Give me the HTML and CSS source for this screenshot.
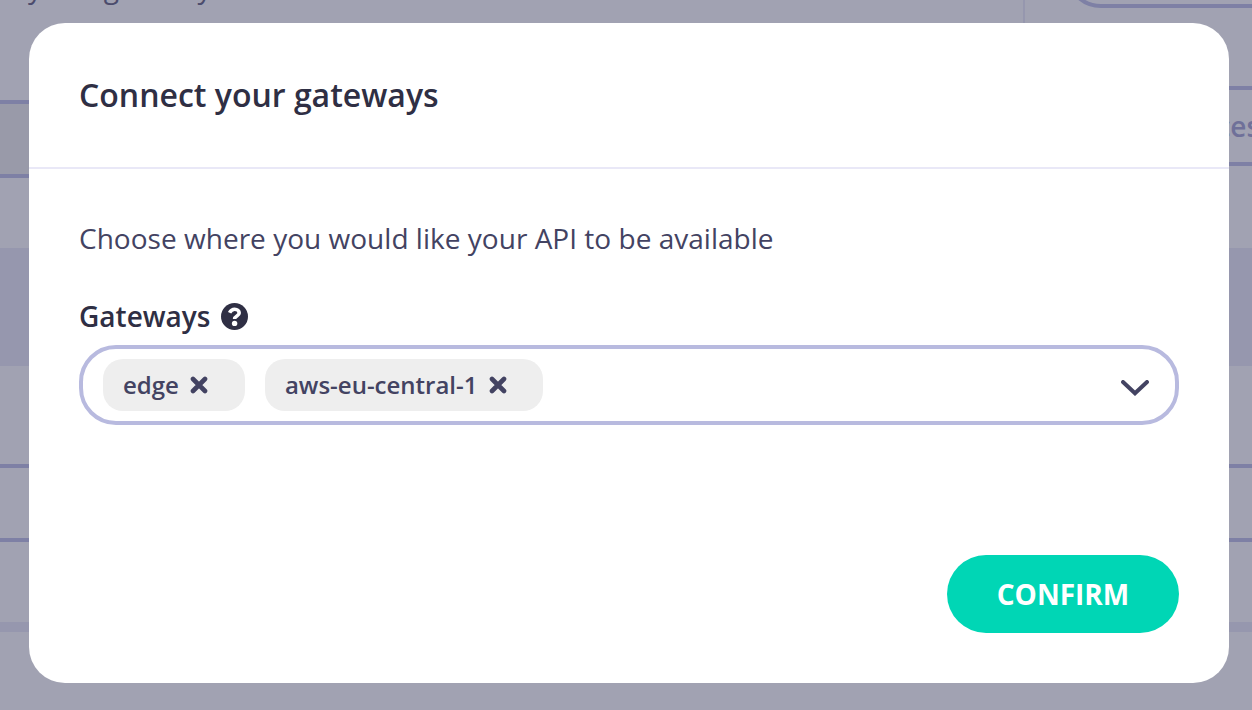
FILE: index.html
```
<!DOCTYPE html>
<html lang="en">
<head>
<meta charset="utf-8">
<title>Connect your gateways</title>
<link rel="stylesheet" href="styles.css">
</head>
<body>
<div class="page">
  <div class="columns">
    <div class="main">
      <p class="intro">your gateway</p>
      <div class="field disabled"></div>
    </div>
    <div class="side">
      <div class="pill"></div>
      <div class="field search"><span>Services</span></div>
    </div>
  </div>
  <div class="band"></div>
  <div class="wide-field"></div>
  <div class="rule"></div>
</div>
<div class="overlay">
  <section class="modal">
    <header class="modal-header"><h1>Connect your gateways</h1></header>
    <div class="modal-body">
      <p class="lead">Choose where you would like your API to be available</p>
      <div class="label"><span>Gateways</span>
        <svg class="help" viewBox="0 0 27 27"><circle cx="13.5" cy="13.5" r="13.5" fill="#2f2f44"/><path d="M8.6 9.8C9.7 7.4 11.4 6.2 13.7 6.2C16.3 6.2 18.2 7.8 18.2 10C18.2 13.1 13.6 12.8 13.6 16" fill="none" stroke="#fff" stroke-width="3.6"/><circle cx="13.6" cy="20.4" r="2.7" fill="#fff"/></svg>
      </div>
      <div class="select">
        <div class="chip"><span>edge</span><svg class="close" viewBox="0 0 18 18"><path d="M3 3L15 15M15 3L3 15"/></svg></div>
        <div class="chip"><span>aws-eu-central-1</span><svg class="close" viewBox="0 0 18 18"><path d="M3 3L15 15M15 3L3 15"/></svg></div>
        <svg class="chevron" viewBox="0 0 28 16"><path d="M2 2L14 13.3L26 2"/></svg>
      </div>
      <div class="actions"><button class="confirm">CONFIRM</button></div>
    </div>
  </section>
</div>
</body>
</html>
```
FILE: styles.css
```
* { box-sizing: border-box; }
body {
  margin: 0;
  height: 710px;
  overflow: hidden;
  font-family: "Open Sans", sans-serif;
  color: #434362;
}
h1, p { margin: 0; }
.page { height: 710px; overflow: hidden; background: #a1a2b2; }
.columns { display: flex; height: 248px; }
.main { flex: none; width: 1025px; height: 248px; border-right: 2px solid #9697ae; }
.intro { margin-top: -32px; padding-left: 28px; height: 132px; font-size: 28px; line-height: 38px; word-spacing: 9px; color: #4c4c6d; }
.field { height: 78px; border: solid #7e80a5; border-width: 4px 0; }
.disabled { background: #999aa9; }
.side { flex: 1; min-width: 0; padding-left: 40px; }
.pill { width: 300px; height: 78px; margin-top: -70px; border: 4px solid #7e80a5; border-radius: 36px; }
.search { height: 80px; margin-top: 78px; padding-left: 85px; font-size: 28px; line-height: 72px; font-weight: 600; color: #6f7099; white-space: nowrap; }
.band { height: 118px; background: #9697ae; }
.wide-field { height: 78px; margin-top: 98px; border: solid #7e80a5; border-width: 4px 0; }
.rule { height: 10px; margin-top: 80px; background: #9697ae; }
.overlay { position: fixed; inset: 0; padding: 23px 23px 27px 29px; }
.modal { width: 1200px; height: 660px; border-radius: 36px; background: #fff; }
.modal-header { height: 146px; padding: 50px 50px 0; border-bottom: 2px solid #e9e8f7; }
h1 { font-size: 32px; line-height: 44px; font-weight: 600; color: #2f2f44; white-space: nowrap; }
.modal-body { padding: 49px 50px; }
.lead { font-size: 28px; line-height: 40px; letter-spacing: 0.02px; white-space: nowrap; }
.label { display: flex; align-items: center; gap: 11px; height: 40px; margin-top: 38px; font-size: 28px; font-weight: 600; line-height: 40px; color: #2f2f44; }
.help { width: 27px; height: 27px; }
.select { display: flex; align-items: center; gap: 20px; height: 80px; margin-top: 9px; padding: 0 26px 0 20px; border: 4px solid #b8badf; border-radius: 37px; }
.chip { display: flex; align-items: center; gap: 11px; height: 52px; padding: 0 37px 0 20px; border-radius: 20px; background: #eee; font-size: 24px; font-weight: 600; }
.chip + .chip { padding-right: 36px; }
.chip span { padding-bottom: 2px; }
.close { width: 18px; height: 18px; }
.close path { fill: none; stroke: #434362; stroke-width: 4.6; stroke-linecap: round; }
.chevron { width: 28px; height: 16px; margin-left: auto; margin-top: 5px; }
.chevron path { fill: none; stroke: #434362; stroke-width: 4; stroke-linecap: round; }
.actions { display: flex; justify-content: flex-end; margin-top: 130px; }
.confirm { width: 232px; height: 78px; padding: 0; border: 0; border-radius: 39px; background: #00d6b5; color: #fff; font: 700 28px/78px "Open Sans", sans-serif; }
```
